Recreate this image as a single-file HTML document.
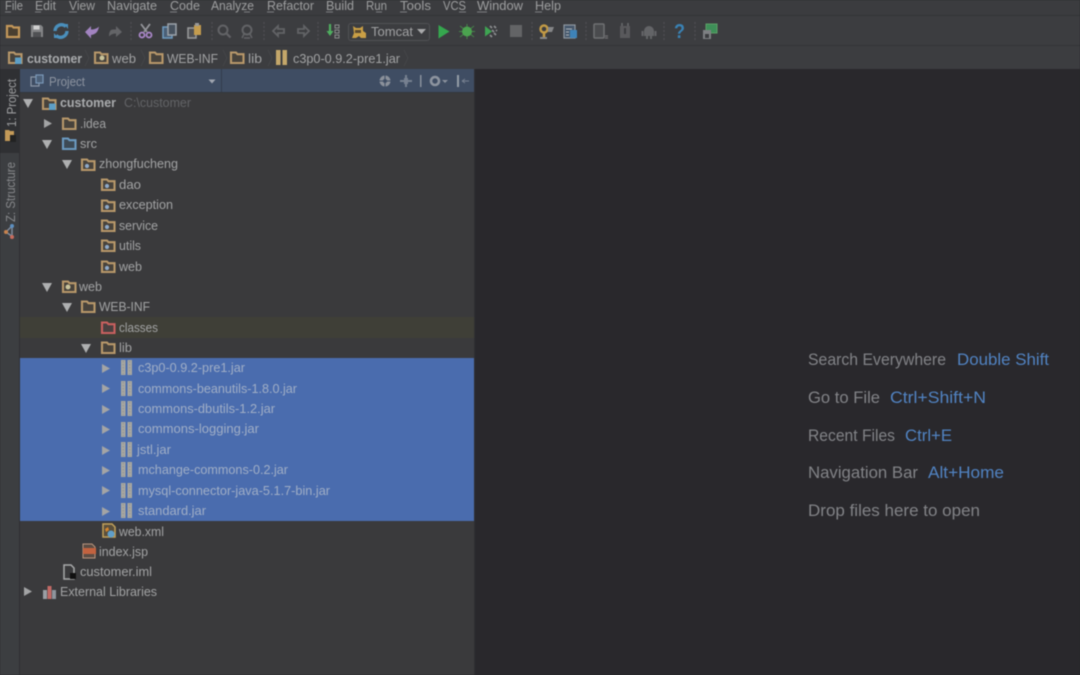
<!DOCTYPE html>
<html><head><meta charset="utf-8"><style>
html,body{margin:0;padding:0;background:#29282c;width:1080px;height:675px;overflow:hidden}
svg{display:block;filter:blur(.55px)}
text{font-family:"Liberation Sans",sans-serif;font-size:12.5px;fill:#a2a3a4}
.m{fill:#9d9e9f}
.t{fill:#9b9d9f}
.s{fill:#a0aec6}
.h{font-size:16.5px;fill:#828387}
.k{font-size:16.5px;fill:#5183c2}
.b{font-weight:bold;fill:#a9abad}
</style></head><body>
<svg width="1080" height="675" viewBox="0 0 1080 675" xmlns="http://www.w3.org/2000/svg">
<defs>
<g id="f"><path d="M1 2.500h5l1.500 1.700H13.500V13H1z" fill="#48433c" stroke="#b8986a" stroke-width="2.100"/></g>
<g id="fp"><use href="#f"/><circle cx="6" cy="9" r="2.100" fill="#8fa9c8"/></g>
<g id="fc"><path d="M1 2.500h5l1.500 1.700H13.500V13H1z" fill="#4a4040" stroke="#c9605f" stroke-width="2.100"/></g>
<g id="fb"><path d="M1 2.500h5l1.500 1.700H13.500V13H1z" fill="#3d4a55" stroke="#6b9ac0" stroke-width="2.100"/></g>
<g id="fm"><use href="#f"/><rect x="7" y="7.500" width="6.500" height="6.500" fill="#5d9fc6"/></g>
<g id="j"><rect x="0" y="0" width="4.500" height="15" fill="#a9a8a0"/><rect x="6.500" y="0" width="4.500" height="15" fill="#a9a8a0"/><path d="M2.200 1v13M8.700 1v13" stroke="#8a8f98" stroke-width="1" stroke-dasharray="1.500 1.500"/></g>
<path id="r" d="M0 0L8 4.500L0 9z" fill="#a3a4a5"/>
<path id="d" d="M0 0H10L5 9z" fill="#aeafb0"/>
</defs>

<rect width="1080" height="675" fill="#29282c"/>
<!-- menu -->
<rect width="1080" height="15" fill="#3b3c3f"/>
<rect y="15" width="1080" height="1" fill="#333437"/>
<g class="menu">
<text class="m" x="5" y="10" textLength="18" lengthAdjust="spacingAndGlyphs">File</text>
<text class="m" x="35" y="10" textLength="21" lengthAdjust="spacingAndGlyphs">Edit</text>
<text class="m" x="69" y="10" textLength="26" lengthAdjust="spacingAndGlyphs">View</text>
<text class="m" x="107" y="10" textLength="50" lengthAdjust="spacingAndGlyphs">Navigate</text>
<text class="m" x="170" y="10" textLength="30" lengthAdjust="spacingAndGlyphs">Code</text>
<text class="m" x="211" y="10" textLength="43" lengthAdjust="spacingAndGlyphs">Analyze</text>
<text class="m" x="267" y="10" textLength="47" lengthAdjust="spacingAndGlyphs">Refactor</text>
<text class="m" x="326" y="10" textLength="28" lengthAdjust="spacingAndGlyphs">Build</text>
<text class="m" x="366" y="10" textLength="21" lengthAdjust="spacingAndGlyphs">Run</text>
<text class="m" x="400" y="10" textLength="31" lengthAdjust="spacingAndGlyphs">Tools</text>
<text class="m" x="443" y="10" textLength="23" lengthAdjust="spacingAndGlyphs">VCS</text>
<text class="m" x="477" y="10" textLength="46" lengthAdjust="spacingAndGlyphs">Window</text>
<text class="m" x="535" y="10" textLength="26" lengthAdjust="spacingAndGlyphs">Help</text>
</g>
<path d="M5 12h6M35 12h6M69 12h8M107 12h8M170 12h7M244 12h6M267 12h7M326 12h7M376 12h6M400 12h7M459 12h7M477 12h10M535 12h7" stroke="#7c7d81" stroke-width="1"/>

<!-- toolbar -->
<rect y="16" width="1080" height="29" fill="#3c3d40"/>
<rect y="45" width="1080" height="1" fill="#333437"/>
<path d="M7 26h5l1.500 1.500H19V37H7z" fill="#4a3f30" stroke="#c4985a" stroke-width="2.200"/>
<path d="M31 25h10l2 2v10H31z" fill="#848587"/><rect x="33.500" y="25.500" width="6" height="4" fill="#d0d0d0"/><rect x="33" y="32" width="8" height="5" fill="#505154"/>
<path d="M55 31a6.500 6.500 0 0 1 11-4.500M67 31a6.500 6.500 0 0 1-11 4.500" fill="none" stroke="#4a8fbc" stroke-width="3.400"/><path d="M64 24l4 0 0 5zM58 38l-4 0 0-5z" fill="#4a8fbc"/>
<path d="M85 32l6-6v3.500c3 0 6-1 8-3-1 6-4 8-8 8.500v3.500z" fill="#a183c0"/>
<path d="M122 32l-6-6v3.500h-3c-3 0-4 3-4 7 2-2 4-3 7-3v3.500z" fill="#636467"/>
<path d="M141 24l6 8M150 24l-6 8" stroke="#94959a" stroke-width="1.800"/><circle cx="142" cy="35" r="2.500" fill="none" stroke="#a986c8" stroke-width="1.800"/><circle cx="149" cy="35" r="2.500" fill="none" stroke="#a986c8" stroke-width="1.800"/>
<rect x="163" y="27" width="9" height="11" fill="#4a5f76" stroke="#6f9cc0" stroke-width="1.500"/><rect x="168" y="24" width="8" height="11" fill="#47525e" stroke="#9ca3aa" stroke-width="1.500"/>
<rect x="188" y="28" width="8" height="10" fill="#505154" stroke="#9a9b9c" stroke-width="1.500"/><rect x="194" y="25" width="7" height="10" fill="#c49c4e"/><rect x="195" y="23" width="4" height="3" fill="#999"/>
<circle cx="223" cy="30" r="4.500" fill="none" stroke="#626366" stroke-width="2"/><path d="M226.500 33.500l4 4" stroke="#626366" stroke-width="2.200"/>
<circle cx="247" cy="30" r="4.500" fill="none" stroke="#626366" stroke-width="2"/><path d="M244 34l-2 4M250 34l2 4M244 38h6" stroke="#626366" stroke-width="1.500"/>
<path d="M273 31l5-5v3h6v4h-6v3z" fill="none" stroke="#626366" stroke-width="1.800"/>
<path d="M309 31l-5-5v3h-6v4h6v3z" fill="none" stroke="#626366" stroke-width="1.800"/>
<path d="M330 24v8" stroke="#4fae5f" stroke-width="2.200"/><path d="M326.500 31h7l-3.500 5z" fill="#4fae5f"/>
<path d="M335 25h4v3h-4zM335 30h4v3h-4zM335 35h4v3h-4z" fill="none" stroke="#8a8b8c" stroke-width="1"/>
<path d="M79 22v18M131 22v18M212 22v18M264 22v18M318 22v18M532 22v18M586 22v18M664 22v18M695 22v18" stroke="#505154" stroke-width="1" stroke-dasharray="2 2"/>
<rect x="348.500" y="23.500" width="81" height="17" rx="2.500" fill="#3c3d40" stroke="#505154"/>
<path d="M353 26l3 2h4l3-2v5l3 2v5h-5l-2-2-3 2h-4l2-5z" fill="#c99f45"/><path d="M355 30h6v3h-6z" fill="#5a4a30"/>
<text x="371" y="36" textLength="42" lengthAdjust="spacingAndGlyphs" style="fill:#a0a1a2">Tomcat</text>
<path d="M417 29h9l-4.500 5z" fill="#a8a9aa"/>
<path d="M438.500 25l11 6.500-11 7z" fill="#35a74e"/>
<circle cx="467" cy="31.500" r="5" fill="#4ba34f"/><path d="M460 26l14 11M474 26l-14 11M459 31.500h16M467 24v15" stroke="#4ba34f" stroke-width="1" opacity=".7"/>
<path d="M485 26l7 5.500-7 5z" fill="#3ea452"/><path d="M490 26l2 2M494 26l2 2M492 30l2 2M496 30l1 1M490 35l2 2M494 33l2 2" stroke="#8e9092" stroke-width="1.600"/>
<rect x="510" y="25" width="12" height="12" fill="#636466"/>
<circle cx="544" cy="29" r="3.500" fill="none" stroke="#c29a45" stroke-width="2.400"/><path d="M544 32v5" stroke="#c29a45" stroke-width="2.500"/><path d="M548 27h6l-2 5h-4zM540 37h7v2h-7z" fill="#858688"/>
<rect x="564" y="25" width="11" height="13" fill="#46586c" stroke="#8f98a0" stroke-width="1.200"/><rect x="570" y="30" width="7" height="8" fill="#3e83b8"/><path d="M566 29h6M566 32h3M566 35h3" stroke="#b0b5ba"/>
<rect x="594" y="24" width="10" height="14" rx="1" fill="#4a4b4e" stroke="#6f7072" stroke-width="1.500"/><path d="M605 36h3M605 38h3" stroke="#6f7072" stroke-width="1.300"/>
<path d="M620 26h10v12h-10z" fill="#59595c"/><path d="M622 23v3M628 23v3" stroke="#6a6b6d" stroke-width="1.500"/><path d="M625 28v6" stroke="#3a3b3e" stroke-width="2"/>
<path d="M644 31a5 5 0 0 1 10 0v5h-10z" fill="#636467"/><rect x="641.500" y="31" width="2" height="5" fill="#636467"/><rect x="654.500" y="31" width="2" height="5" fill="#636467"/><rect x="646" y="36" width="2" height="3" fill="#636467"/><rect x="650" y="36" width="2" height="3" fill="#636467"/>
<text x="674" y="38" style="font-size:20px;font-weight:bold;fill:#3a82b4" textLength="11" lengthAdjust="spacingAndGlyphs">?</text>
<rect x="706" y="24" width="11" height="9" fill="#3e8f58" stroke="#5c9f66" stroke-width="1"/><path d="M703 30h8v9h-8z" fill="#7e8083"/><rect x="705" y="34" width="4" height="4" fill="#3c3d40"/>

<!-- breadcrumb -->
<rect y="46" width="1080" height="23" fill="#3c3d40"/>
<use href="#fm" x="8" y="50"/>
<text class="b" x="27" y="63" textLength="55" lengthAdjust="spacingAndGlyphs">customer</text>
<use href="#f" x="94" y="50"/><circle cx="102" cy="58" r="2.500" fill="#c7c29a"/>
<text x="112" y="63" textLength="24" lengthAdjust="spacingAndGlyphs">web</text>
<use href="#f" x="149" y="50"/>
<text x="167" y="63" textLength="51" lengthAdjust="spacingAndGlyphs">WEB-INF</text>
<use href="#f" x="230" y="50"/>
<text x="248" y="63" textLength="14" lengthAdjust="spacingAndGlyphs">lib</text>
<g transform="translate(276,50)"><rect width="4.500" height="15" fill="#c4a76a"/><rect x="6.500" width="4.500" height="15" fill="#c4a76a"/></g>
<text x="293" y="63" textLength="107" lengthAdjust="spacingAndGlyphs">c3p0-0.9.2-pre1.jar</text>
<path d="M85 50l4 8-4 8M141 50l4 8-4 8M223 50l4 8-4 8M268 50l4 8-4 8M404 50l4 8-4 8" fill="none" stroke="#454649"/>

<!-- left strip -->
<rect y="69" width="20" height="606" fill="#3c3e41"/>
<rect y="69" width="19" height="84" fill="#2f3033"/>
<rect x="19" y="69" width="1" height="606" fill="#2f3033"/>
<text transform="translate(16,127) rotate(-90)" textLength="48" lengthAdjust="spacingAndGlyphs" style="fill:#9c9d9f">1: Project</text>
<path d="M5 130h4l1 1h4v10H5z" fill="#c49a58"/><rect x="10" y="135" width="6" height="7" fill="#222"/>
<text transform="translate(15,222) rotate(-90)" textLength="60" lengthAdjust="spacingAndGlyphs" style="fill:#86878a">Z: Structure</text>
<path d="M6 232l6-6M6 232l7 5M12 226v11" stroke="#7f8b9c" stroke-width="1.500"/><circle cx="12" cy="226" r="2" fill="#5d8fc0"/><circle cx="6" cy="232" r="2" fill="#c8834e"/><circle cx="12" cy="237" r="2" fill="#c76b5d"/>

<!-- project panel -->
<rect x="20" y="69" width="455" height="606" fill="#3a3a3c"/>
<rect x="20" y="69" width="455" height="23" fill="#3f4d63"/>
<rect x="221" y="69" width="1" height="23" fill="#333c4c"/>
<rect x="20" y="92" width="455" height="1" fill="#33363b"/>
<rect x="474" y="69" width="1" height="606" fill="#303033"/>
<rect x="31" y="77" width="8" height="9" fill="none" stroke="#8c99a8" stroke-width="1.200"/><rect x="36" y="75" width="7" height="8" fill="#4c6078" stroke="#7a98b8" stroke-width="1.200"/>
<text x="49" y="86" textLength="36" lengthAdjust="spacingAndGlyphs" style="fill:#8d94a0">Project</text>
<path d="M208.500 79.500h7l-3.500 4z" fill="#a0a6b0"/>
<circle cx="385" cy="81" r="5.500" fill="#8a909a"/><circle cx="385" cy="81" r="2" fill="#3f4d63"/><path d="M379 81h12M385 75v12" stroke="#3f4d63"/>
<path d="M406 75v12M400 81h12" stroke="#768090" stroke-width="2"/><path d="M404 78h4v6h-4z" fill="#768090"/>
<rect x="420" y="75" width="1.500" height="12" fill="#8a919d"/>
<circle cx="435" cy="81" r="4" fill="none" stroke="#8d949f" stroke-width="2.600"/><path d="M442 80h6l-3 3z" fill="#8a919d"/>
<rect x="457" y="75" width="2" height="12" fill="#949ca7"/><path d="M462 81h7M462 81l3-2M462 81l3 2" stroke="#768090"/>

<!-- highlight rows -->
<rect x="20" y="317" width="454" height="21" fill="#3f3f37"/>
<rect x="20" y="358" width="454" height="163" fill="#4a6cae"/>

<!-- tree -->
<use href="#d" x="23" y="99"/>
<use href="#fm" x="42" y="96"/>
<text class="b" x="60" y="107" textLength="56" lengthAdjust="spacingAndGlyphs">customer</text>
<text x="124" y="107" textLength="67" lengthAdjust="spacingAndGlyphs" style="fill:#626366">C:\customer</text>

<use href="#r" x="44" y="119"/>
<use href="#f" x="62" y="116"/>
<text x="80" y="128" textLength="26" lengthAdjust="spacingAndGlyphs">.idea</text>

<use href="#d" x="42" y="140"/>
<use href="#fb" x="62" y="136"/>
<text x="80" y="148" textLength="17" lengthAdjust="spacingAndGlyphs">src</text>

<use href="#d" x="62" y="160"/>
<use href="#fp" x="81" y="157"/>
<text x="99" y="168" textLength="79" lengthAdjust="spacingAndGlyphs">zhongfucheng</text>

<use href="#fp" x="101" y="177"/>
<text x="119" y="189" textLength="22" lengthAdjust="spacingAndGlyphs">dao</text>
<use href="#fp" x="101" y="198"/>
<text x="119" y="209" textLength="54" lengthAdjust="spacingAndGlyphs">exception</text>
<use href="#fp" x="101" y="218"/>
<text x="119" y="230" textLength="39" lengthAdjust="spacingAndGlyphs">service</text>
<use href="#fp" x="101" y="238"/>
<text x="119" y="250" textLength="22" lengthAdjust="spacingAndGlyphs">utils</text>
<use href="#fp" x="101" y="259"/>
<text x="119" y="271" textLength="23" lengthAdjust="spacingAndGlyphs">web</text>

<use href="#d" x="42" y="283"/>
<use href="#f" x="62" y="279"/><circle cx="68" cy="287" r="2.500" fill="#c9c49c"/>
<text x="79" y="291" textLength="23" lengthAdjust="spacingAndGlyphs">web</text>

<use href="#d" x="62" y="303"/>
<use href="#f" x="81" y="299"/>
<text x="99" y="311" textLength="51" lengthAdjust="spacingAndGlyphs">WEB-INF</text>

<use href="#fc" x="101" y="320"/>
<text x="119" y="332" textLength="39" lengthAdjust="spacingAndGlyphs">classes</text>

<use href="#d" x="81" y="344"/>
<use href="#f" x="101" y="340"/>
<text x="119" y="352" textLength="13" lengthAdjust="spacingAndGlyphs">lib</text>

<use href="#r" x="102" y="364"/><use href="#j" x="121" y="360"/>
<text class="s" x="138" y="372" textLength="107" lengthAdjust="spacingAndGlyphs">c3p0-0.9.2-pre1.jar</text>
<use href="#r" x="102" y="384"/><use href="#j" x="121" y="381"/>
<text class="s" x="138" y="393" textLength="159" lengthAdjust="spacingAndGlyphs">commons-beanutils-1.8.0.jar</text>
<use href="#r" x="102" y="405"/><use href="#j" x="121" y="401"/>
<text class="s" x="138" y="413" textLength="137" lengthAdjust="spacingAndGlyphs">commons-dbutils-1.2.jar</text>
<use href="#r" x="102" y="425"/><use href="#j" x="121" y="422"/>
<text class="s" x="138" y="433" textLength="121" lengthAdjust="spacingAndGlyphs">commons-logging.jar</text>
<use href="#r" x="102" y="446"/><use href="#j" x="121" y="442"/>
<text class="s" x="137" y="454" textLength="34" lengthAdjust="spacingAndGlyphs">jstl.jar</text>
<use href="#r" x="102" y="466"/><use href="#j" x="121" y="462"/>
<text class="s" x="138" y="474" textLength="150" lengthAdjust="spacingAndGlyphs">mchange-commons-0.2.jar</text>
<use href="#r" x="102" y="486"/><use href="#j" x="121" y="483"/>
<text class="s" x="138" y="495" textLength="192" lengthAdjust="spacingAndGlyphs">mysql-connector-java-5.1.7-bin.jar</text>
<use href="#r" x="102" y="507"/><use href="#j" x="121" y="503"/>
<text class="s" x="138" y="515" textLength="68" lengthAdjust="spacingAndGlyphs">standard.jar</text>

<path d="M103 524h9l3 3v10h-12z" fill="#5a4f3c" stroke="#c2a15a" stroke-width="1.500"/><circle cx="111" cy="534" r="3.500" fill="#5f9ec9"/><path d="M105 529l3-2 1 3-3 2z" fill="#d4862f"/>
<text x="119" y="536" textLength="45" lengthAdjust="spacingAndGlyphs">web.xml</text>

<path d="M83 544h9l3 3v11H83z" fill="#5a4c44" stroke="#b9957c" stroke-width="1"/><rect x="83" y="548" width="13" height="6" fill="#c2623f"/>
<text x="99" y="556" textLength="49" lengthAdjust="spacingAndGlyphs">index.jsp</text>

<path d="M64 565h7l3 3v11H64z" fill="#3a3a3c" stroke="#a8a9aa" stroke-width="1.500"/><rect x="70" y="573" width="6" height="6" fill="#111"/>
<text x="80" y="576" textLength="72" lengthAdjust="spacingAndGlyphs">customer.iml</text>

<use href="#r" x="24" y="587"/>
<rect x="43" y="590" width="4" height="9" fill="#9a9ea4"/><rect x="47.500" y="586" width="4" height="13" fill="#c26a66"/><rect x="52" y="590" width="4" height="9" fill="#8e949c"/>
<text x="60" y="596" textLength="97" lengthAdjust="spacingAndGlyphs">External Libraries</text>

<!-- editor hints -->
<text class="h" x="808" y="365" textLength="138" lengthAdjust="spacingAndGlyphs">Search Everywhere</text>
<text class="k" x="957" y="365" textLength="92" lengthAdjust="spacingAndGlyphs">Double Shift</text>
<text class="h" x="808" y="403" textLength="72" lengthAdjust="spacingAndGlyphs">Go to File</text>
<text class="k" x="890" y="403" textLength="96" lengthAdjust="spacingAndGlyphs">Ctrl+Shift+N</text>
<text class="h" x="808" y="441" textLength="87" lengthAdjust="spacingAndGlyphs">Recent Files</text>
<text class="k" x="905" y="441" textLength="47" lengthAdjust="spacingAndGlyphs">Ctrl+E</text>
<text class="h" x="808" y="478" textLength="110" lengthAdjust="spacingAndGlyphs">Navigation Bar</text>
<text class="k" x="928" y="478" textLength="76" lengthAdjust="spacingAndGlyphs">Alt+Home</text>
<text class="h" x="808" y="516" textLength="172" lengthAdjust="spacingAndGlyphs">Drop files here to open</text>
</svg>
</body></html>
